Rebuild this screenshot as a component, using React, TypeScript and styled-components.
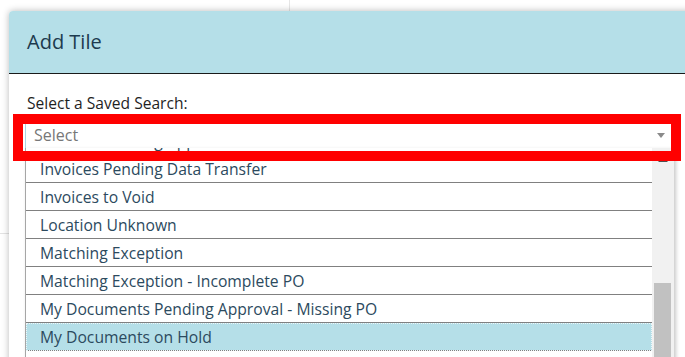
import React from "react";
import styled, { createGlobalStyle } from "styled-components";

const GlobalStyle = createGlobalStyle`
  html, body {
    margin: 0;
    padding: 0;
    background: #ffffff;
    overflow: hidden;
    font-family: "Open Sans", "Liberation Sans", sans-serif;
  }
  #root {
    width: 685px;
    height: 357px;
  }
`;

const Page = styled.div`
  position: relative;
  width: 685px;
  height: 357px;
  overflow: hidden;
  background: #ffffff;
`;

const Backdrop = styled.div`
  display: grid;
  grid-template-columns: 290px 1fr;
  height: 100%;
`;

const BackColumn = styled.div`
  border-right: 1px solid #e6e6e6;
  display: flex;
  flex-direction: column;
`;

const BackPanel = styled.div`
  height: 233px;
  border-bottom: 1px solid #e3e3e3;
`;

const Modal = styled.div`
  position: absolute;
  left: 9px;
  top: 11px;
  width: 700px;
  height: 360px;
  background: #ffffff;
  border-radius: 4px 0 0 0;
  box-shadow: 0 0 7px rgba(0, 0, 0, 0.28);
  display: flex;
  flex-direction: column;
`;

const Header = styled.div`
  height: 62px;
  background: #b5dfe8;
  border-bottom: 1px solid #1a1a1a;
  border-radius: 4px 0 0 0;
  display: flex;
  align-items: center;
  padding: 0 18px;
`;

const Title = styled.h2`
  margin: 0;
  font-size: 20px;
  font-weight: 400;
  color: #1c3a4e;
  line-height: 26px;
`;

const Body = styled.div`
  padding: 19px 18px 0;
  display: flex;
  flex-direction: column;
`;

const Label = styled.label`
  font-size: 15.6px;
  line-height: 20px;
  color: #1f1f1f;
`;

const SelectWrap = styled.div`
  position: relative;
  margin: 8px 0 0 -2px;
  width: 649px;
  display: flex;
  flex-direction: column;
`;

const SelectBox = styled.div`
  height: 27px;
  box-sizing: border-box;
  border: 1px solid #a9d6e2;
  border-bottom: none;
  width: 648px;
  display: flex;
  align-items: center;
  padding: 0 7px 0 8px;
  background: #ffffff;
`;

const Placeholder = styled.span`
  flex: 1;
  font-size: 16px;
  color: #777777;
  line-height: 20px;
`;

const Caret = styled.span`
  width: 0;
  height: 0;
  border-left: 4px solid transparent;
  border-right: 4px solid transparent;
  border-top: 5px solid #8a8a8a;
`;

const Dropdown = styled.div`
  height: 220px;
  display: flex;
  border-left: 1px solid #a6a6a6;
  box-shadow: 2px 2px 4px rgba(0, 0, 0, 0.22);
  background: #ffffff;
  overflow: hidden;
`;

const Options = styled.ul`
  list-style: none;
  margin: -21px 0 0;
  padding: 0;
  width: 626px;
`;

const Option = styled.li<{ $active?: boolean }>`
  height: 27px;
  border-bottom: 1px solid #808080;
  display: flex;
  align-items: center;
  padding-left: 14px;
  font-size: 15.7px;
  color: #2c4a5e;
  white-space: nowrap;
  background: ${(p) => (p.$active ? "#b5dfe8" : "#ffffff")};
  outline: ${(p) => (p.$active ? "1px dotted #eef7f9" : "none")};
  outline-offset: -1px;
`;

const Scrollbar = styled.div`
  width: 22px;
  background: #f1f1f1;
  display: flex;
  flex-direction: column;
  align-items: flex-start;
`;

const ScrollArrow = styled.span`
  margin: 9px 0 0 6px;
  width: 0;
  height: 0;
  border-left: 5px solid transparent;
  border-right: 5px solid transparent;
  border-bottom: 5px solid #505050;
`;

const Thumb = styled.div`
  margin: 121px 0 0 2px;
  width: 17px;
  height: 120px;
  background: #c1c1c1;
`;

const Annotation = styled.div`
  position: absolute;
  left: -12px;
  top: -7px;
  width: 668px;
  height: 47px;
  box-sizing: border-box;
  border: 10px solid #ff0000;
  pointer-events: none;
`;

const items = [
  "Invoices Pending Approval",
  "Invoices Pending Data Transfer",
  "Invoices to Void",
  "Location Unknown",
  "Matching Exception",
  "Matching Exception - Incomplete PO",
  "My Documents Pending Approval - Missing PO",
  "My Documents on Hold",
  "My Documents Pending Approval",
];

export default function App() {
  return (
    <>
      <GlobalStyle />
      <Page>
        <Backdrop>
          <BackColumn>
            <BackPanel />
          </BackColumn>
          <div />
        </Backdrop>
        <Modal>
          <Header>
            <Title>Add Tile</Title>
          </Header>
          <Body>
            <Label>Select a Saved Search:</Label>
            <SelectWrap>
              <SelectBox>
                <Placeholder>Select</Placeholder>
                <Caret />
              </SelectBox>
              <Dropdown>
                <Options>
                  {items.map((it) => (
                    <Option key={it} $active={it === "My Documents on Hold"}>
                      {it}
                    </Option>
                  ))}
                </Options>
                <Scrollbar>
                  <ScrollArrow />
                  <Thumb />
                </Scrollbar>
              </Dropdown>
              <Annotation />
            </SelectWrap>
          </Body>
        </Modal>
      </Page>
    </>
  );
}
